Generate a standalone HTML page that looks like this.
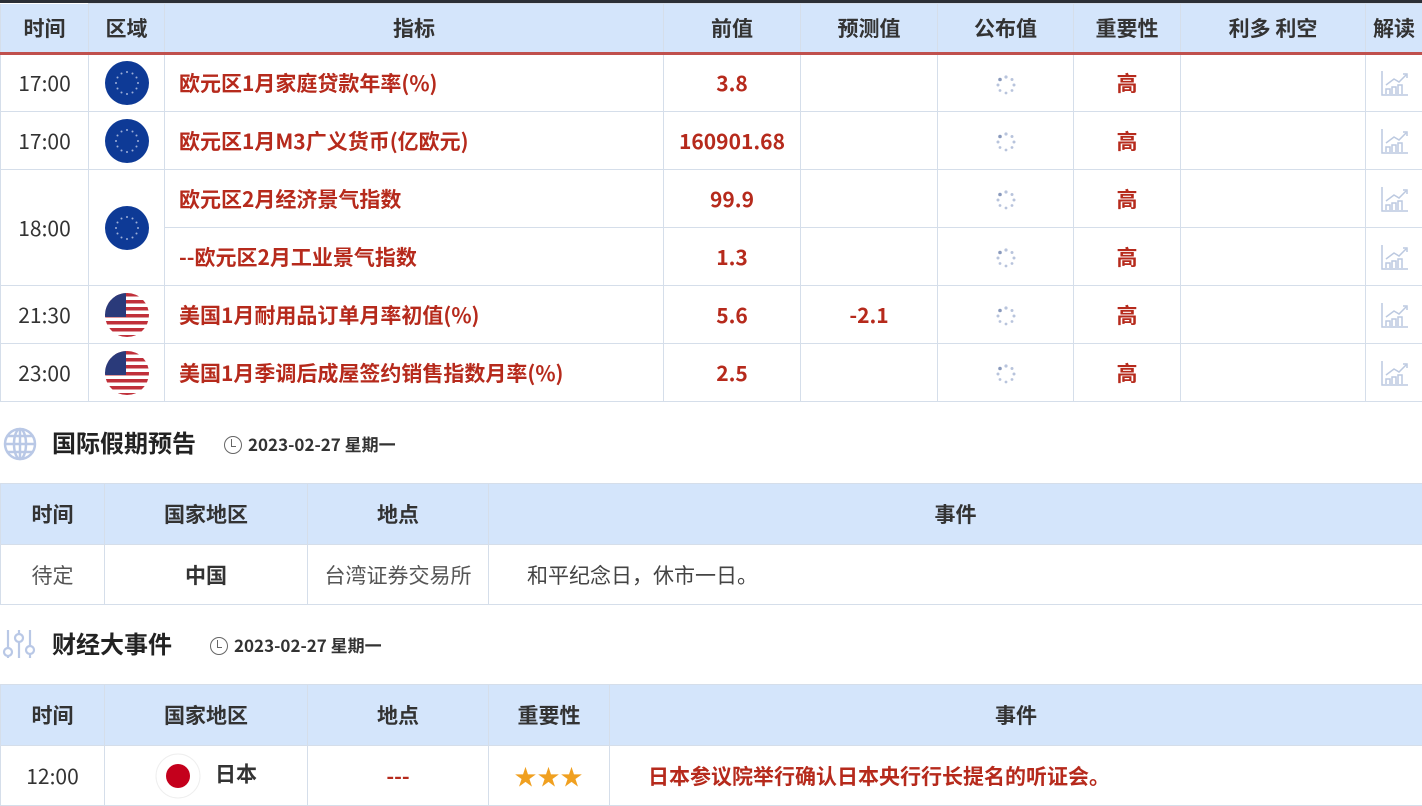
<!DOCTYPE html>
<html><head><meta charset="utf-8">
<style>
*{margin:0;padding:0;box-sizing:border-box}
body{width:1422px;height:799px;overflow:hidden;background:#fff;font-family:"Noto Sans CJK SC","Liberation Sans",sans-serif;position:relative}
table{border-collapse:collapse;table-layout:fixed;position:absolute;left:0}
td,th{border:1px solid #d5deea;text-align:center;vertical-align:middle;font-size:21px;line-height:24px;color:#333;padding:0}
td svg{vertical-align:middle;display:inline-block}
th{background:#d4e5fb;font-weight:bold;color:#333;font-size:21px}
.r{color:#b62a1c;font-weight:bold}
.l{text-align:left;padding-left:14px}
.top{position:absolute;left:0;top:0;width:1422px;height:3px;background:#2b2f36}
.title{position:absolute;left:52px;font-size:24px;line-height:30px;font-weight:bold;color:#222}
.date{position:absolute;font-size:17px;line-height:22px;font-weight:bold;color:#333}
.clk{display:inline-block;width:18px;height:18px;border:1.5px solid #666;border-radius:50%;vertical-align:-3px;margin-right:6px;position:relative}
.clk:after{content:"";position:absolute;left:6px;top:2px;width:4px;height:7px;border-left:1.5px solid #666;border-bottom:1.5px solid #666}
</style></head><body>
<div class="top"></div>
<table style="top:3px;width:1422px">
<colgroup><col style="width:88px"><col style="width:76px"><col style="width:499px"><col style="width:137px"><col style="width:137px"><col style="width:136px"><col style="width:107px"><col style="width:185px"><col style="width:57px"></colgroup>
<tr style="height:50px;border-bottom:3px solid #c0504d"><th style="border-top:none">时间</th><th>区域</th><th>指标</th><th>前值</th><th>预测值</th><th>公布值</th><th>重要性</th><th>利多 利空</th><th>解读</th></tr>
<tr style="height:58px"><td>17:00</td><td><svg width="46" height="46"><use href="#eu"/></svg></td><td class="l r">欧元区1月家庭贷款年率(%)</td><td class="r">3.8</td><td></td><td><svg width="22" height="22"><use href="#sp"/></svg></td><td class="r">高</td><td></td><td><svg width="30" height="28"><use href="#ch"/></svg></td></tr>
<tr style="height:58px"><td>17:00</td><td><svg width="46" height="46"><use href="#eu"/></svg></td><td class="l r">欧元区1月M3广义货币(亿欧元)</td><td class="r">160901.68</td><td></td><td><svg width="22" height="22"><use href="#sp"/></svg></td><td class="r">高</td><td></td><td><svg width="30" height="28"><use href="#ch"/></svg></td></tr>
<tr style="height:58px"><td rowspan="2">18:00</td><td rowspan="2"><svg width="46" height="46"><use href="#eu"/></svg></td><td class="l r">欧元区2月经济景气指数</td><td class="r">99.9</td><td></td><td><svg width="22" height="22"><use href="#sp"/></svg></td><td class="r">高</td><td></td><td><svg width="30" height="28"><use href="#ch"/></svg></td></tr>
<tr style="height:58px"><td class="l r">--欧元区2月工业景气指数</td><td class="r">1.3</td><td></td><td><svg width="22" height="22"><use href="#sp"/></svg></td><td class="r">高</td><td></td><td><svg width="30" height="28"><use href="#ch"/></svg></td></tr>
<tr style="height:58px"><td>21:30</td><td><svg width="46" height="46"><use href="#us"/></svg></td><td class="l r">美国1月耐用品订单月率初值(%)</td><td class="r">5.6</td><td class="r">-2.1</td><td><svg width="22" height="22"><use href="#sp"/></svg></td><td class="r">高</td><td></td><td><svg width="30" height="28"><use href="#ch"/></svg></td></tr>
<tr style="height:58px"><td>23:00</td><td><svg width="46" height="46"><use href="#us"/></svg></td><td class="l r">美国1月季调后成屋签约销售指数月率(%)</td><td class="r">2.5</td><td></td><td><svg width="22" height="22"><use href="#sp"/></svg></td><td class="r">高</td><td></td><td><svg width="30" height="28"><use href="#ch"/></svg></td></tr>
</table>

<svg style="position:absolute;left:3px;top:427px" width="34" height="34" viewBox="0 0 34 34" fill="none" stroke="#b9c8e6" stroke-width="2.5"><circle cx="17" cy="17" r="15"/><ellipse cx="17" cy="17" rx="6" ry="15"/><line x1="2" y1="17" x2="32" y2="17"/><line x1="17" y1="2" x2="17" y2="32"/><path d="M5 9h24M5 25h24"/></svg>
<div class="title" style="top:427px">国际假期预告</div>
<div class="date" style="left:224px;top:433px"><span class="clk"></span>2023-02-27 星期一</div>

<table style="top:483px;width:1422px">
<colgroup><col style="width:104px"><col style="width:203px"><col style="width:181px"><col style="width:934px"></colgroup>
<tr style="height:61px"><th>时间</th><th>国家地区</th><th>地点</th><th>事件</th></tr>
<tr style="height:60px"><td style="color:#555">待定</td><td style="font-weight:bold">中国</td><td style="color:#555">台湾证券交易所</td><td class="l" style="padding-left:38px;color:#444">和平纪念日，休市一日。</td></tr>
</table>

<svg style="position:absolute;left:2px;top:628px" width="36" height="32" viewBox="0 0 36 32" fill="none" stroke="#b9c8e6" stroke-width="2.2"><path d="M6 2v18M6 28v2M17 2v4M17 14v16M28 2v16M28 26v4"/><circle cx="6" cy="24" r="4"/><circle cx="17" cy="10" r="4"/><circle cx="28" cy="22" r="4"/></svg>
<div class="title" style="top:628px">财经大事件</div>
<div class="date" style="left:210px;top:634px"><span class="clk"></span>2023-02-27 星期一</div>

<table style="top:684px;width:1422px">
<colgroup><col style="width:104px"><col style="width:203px"><col style="width:181px"><col style="width:121px"><col style="width:813px"></colgroup>
<tr style="height:61px"><th>时间</th><th>国家地区</th><th>地点</th><th>重要性</th><th>事件</th></tr>
<tr style="height:60px"><td style="color:#333">12:00</td><td style="font-weight:bold"><svg width="46" height="46" style="margin-right:14px"><circle cx="23" cy="23" r="22" fill="#fff" stroke="#eee"/><circle cx="23" cy="23" r="12" fill="#c4001c"/></svg>日本</td><td class="r">---</td><td style="color:#f0a020;font-size:22px;letter-spacing:1px">★★★</td><td class="l r" style="padding-left:38px">日本参议院举行确认日本央行行长提名的听证会。</td></tr>
</table>

<svg width="0" height="0" style="position:absolute">
<defs>
<g id="eu"><circle cx="23" cy="23" r="22" fill="#0e3a96"/><g fill="#9fb0d8"><circle cx="23" cy="12" r="1"/><circle cx="28.5" cy="13.5" r="1"/><circle cx="32.5" cy="17.5" r="1"/><circle cx="34" cy="23" r="1"/><circle cx="32.5" cy="28.5" r="1"/><circle cx="28.5" cy="32.5" r="1"/><circle cx="23" cy="34" r="1"/><circle cx="17.5" cy="32.5" r="1"/><circle cx="13.5" cy="28.5" r="1"/><circle cx="12" cy="23" r="1"/><circle cx="13.5" cy="17.5" r="1"/><circle cx="17.5" cy="13.5" r="1"/></g></g>
<clipPath id="cc"><circle cx="23" cy="23" r="22"/></clipPath>
<g id="us" clip-path="url(#cc)"><rect width="46" height="46" fill="#fff"/><g fill="#c0303a"><rect y="1" width="46" height="3.5"/><rect y="8" width="46" height="3.5"/><rect y="15" width="46" height="3.5"/><rect y="22" width="46" height="3.5"/><rect y="29" width="46" height="3.5"/><rect y="36" width="46" height="3.5"/><rect y="43" width="46" height="3.5"/></g><rect width="22" height="25" fill="#2a3a7a"/></g>
<g id="sp" fill="#b8c4dc"><circle cx="11" cy="3" r="1.6"/><circle cx="17" cy="5.5" r="1.5"/><circle cx="19" cy="11" r="1.5"/><circle cx="17" cy="16.5" r="1.4"/><circle cx="11" cy="19" r="1.4"/><circle cx="5" cy="16.5" r="1.4"/><circle cx="3" cy="11" r="1.5"/><circle cx="5" cy="5.5" r="1.8" fill="#8a9abd"/></g>
<g id="ch" fill="none" stroke="#bcc9e0" stroke-width="1.5"><path d="M3 2v24h26"/><path d="M7 16l8-6 5 3 7-7"/><path d="M24 5h4v4"/><path d="M7 25v-5h4v5M13 25v-7h4v7M19 25v-9h4v9"/></g>
</defs></svg>
</body></html>
